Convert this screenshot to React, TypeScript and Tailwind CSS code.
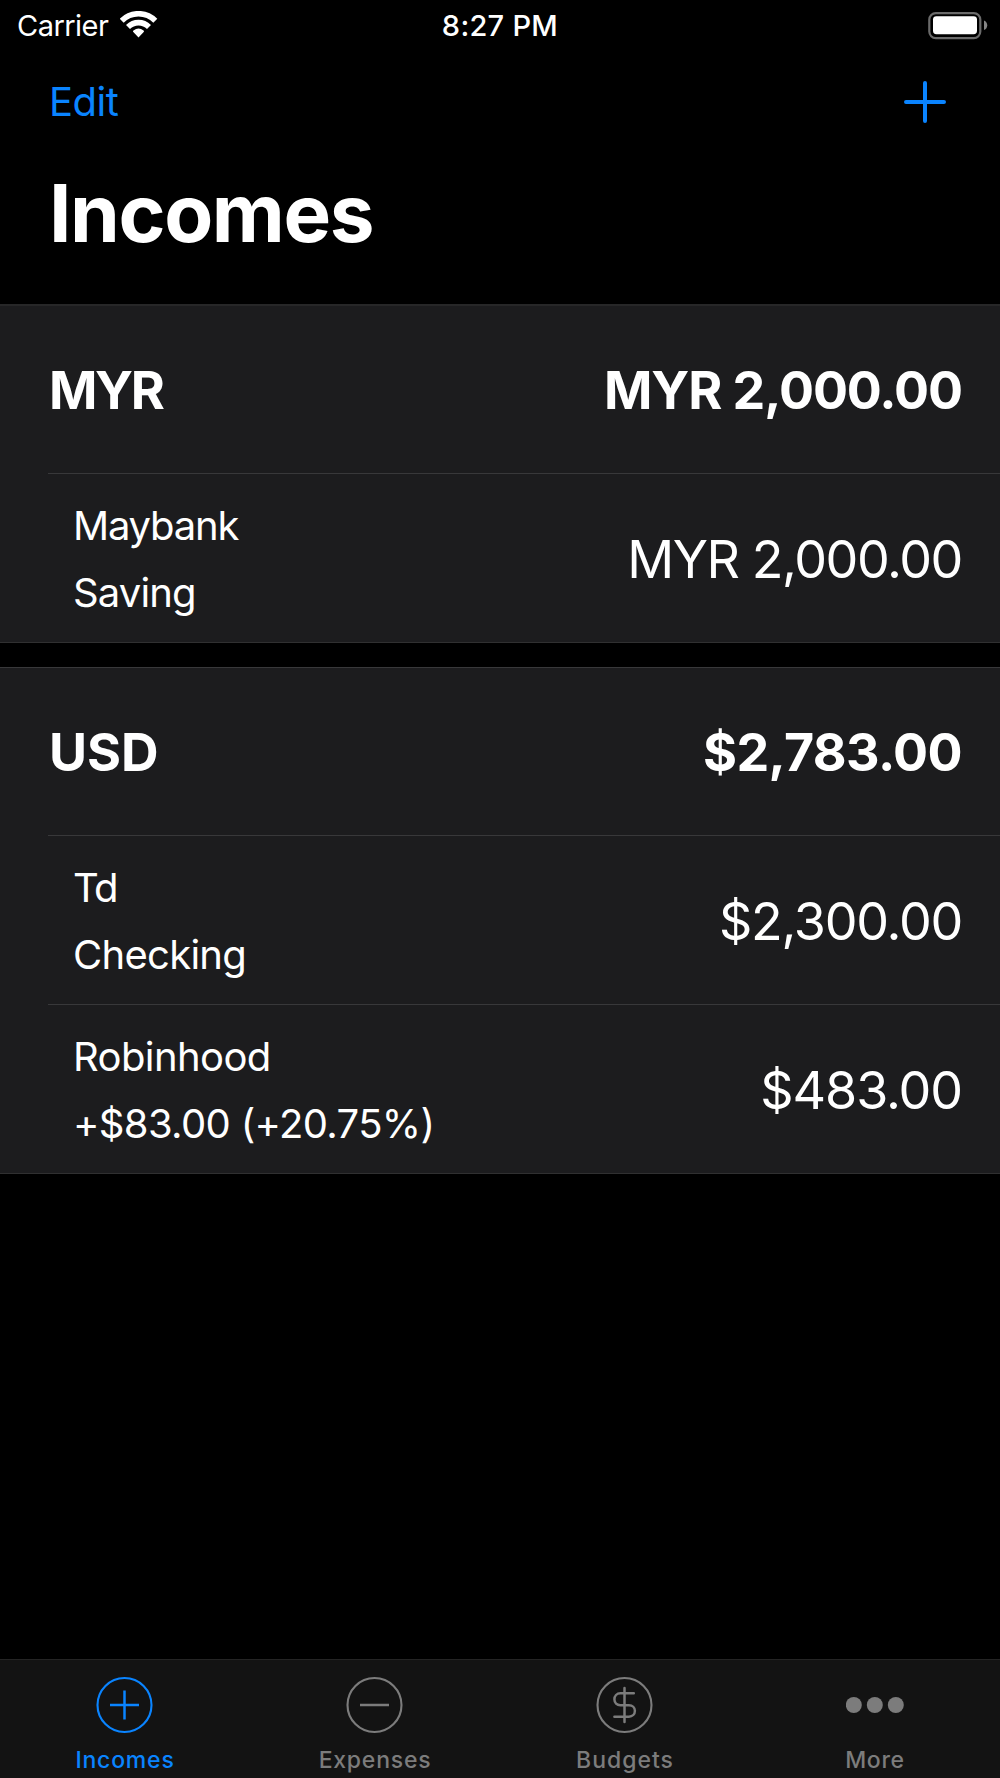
import type { ReactNode } from "react";
import clsx from "clsx";

type Account = {
  name: string;
  nameClass: string;
  detail: string;
  detailClass: string;
  amount: string;
  amountClass: string;
};

type Group = {
  currency: string;
  currencyClass: string;
  total: string;
  totalClass: string;
  sectionClass: string;
  accounts: Account[];
};

const groups: Group[] = [
  {
    currency: "MYR",
    currencyClass: "tracking-[-0.045em]",
    total: "MYR 2,000.00",
    totalClass: "tracking-[-0.0211em]",
    sectionClass: "border-t-2 border-t-[#272728]",
    accounts: [
      {
        name: "Maybank",
        nameClass: "tracking-[-0.03em]",
        detail: "Saving",
        detailClass: "tracking-[-0.0217em]",
        amount: "MYR 2,000.00",
        amountClass: "tracking-[-0.0276em]",
      },
    ],
  },
  {
    currency: "USD",
    currencyClass: "tracking-[-0.001em]",
    total: "$2,783.00",
    totalClass: "tracking-[-0.012em]",
    sectionClass: "border-t border-t-[#38383a]",
    accounts: [
      {
        name: "Td",
        nameClass: "tracking-[-0.04em]",
        detail: "Checking",
        detailClass: "tracking-[-0.018em]",
        amount: "$2,300.00",
        amountClass: "tracking-[-0.0241em]",
      },
      {
        name: "Robinhood",
        nameClass: "tracking-[-0.015em]",
        detail: "+$83.00 (+20.75%)",
        detailClass: "tracking-[-0.0165em]",
        amount: "$483.00",
        amountClass: "tracking-[-0.021em]",
      },
    ],
  },
];

function WifiIcon() {
  return (
    <svg width="38" height="30" viewBox="0 -0.7 38 30" fill="none">
      <path d="M1.7 9A23.7 23.7 0 0 1 35.3 9" stroke="white" strokeWidth="5.6" />
      <path d="M8 15.3A14.8 14.8 0 0 1 29 15.3" stroke="white" strokeWidth="5.6" />
      <path d="M13.3 20.3C12.8 19.8 12.9 19.2 13.5 18.8A8.3 8.3 0 0 1 23.5 18.8C24.1 19.2 24.2 19.8 23.7 20.3L18.5 25.8Z" fill="white" />
    </svg>
  );
}

function BatteryIcon() {
  return (
    <svg width="60" height="28" viewBox="0 0 60 28" fill="none">
      <rect x="1.3" y="1.1" width="51" height="25" rx="6.5" stroke="#6b6b6b" strokeWidth="2.2" />
      <rect x="5" y="4.2" width="44" height="18" rx="3.4" fill="white" />
      <path d="M56 8.4C58.2 9.2 59.2 11 59.2 13.2C59.2 15.4 58.2 17.2 56 18Z" fill="#868686" />
    </svg>
  );
}

function CircleIcon({ children }: { children: ReactNode }) {
  return (
    <svg width="58" height="58" viewBox="0 0 58 58" fill="none" stroke="currentColor" strokeWidth="2.1">
      <circle cx="28.5" cy="29" r="27" />
      {children}
    </svg>
  );
}

const tabs = [
  {
    label: "Incomes",
    className: "text-[#0a84ff] tracking-[0.0347em]",
    icon: (
      <CircleIcon>
        <path d="M14 29H43M28.5 14.5V43.5" strokeWidth="2.5" />
      </CircleIcon>
    ),
  },
  {
    label: "Expenses",
    className: "text-[#7c7c7c] tracking-[0.0333em]",
    icon: (
      <CircleIcon>
        <path d="M14 29H43" strokeWidth="2.5" />
      </CircleIcon>
    ),
  },
  {
    label: "Budgets",
    className: "text-[#7c7c7c] tracking-[0.0431em]",
    icon: (
      <CircleIcon>
        <path
          d="M37.8 17.3H24.4C20.8 17.3 18.4 20 18.4 23.3C18.4 26.7 20.9 29.2 24.4 29.2H32.9C36.5 29.2 38.9 31.6 38.9 34.8C38.9 38.1 36.5 40.7 32.9 40.7H18.4M28.5 12V46"
          strokeWidth="2.5"
          strokeLinecap="round"
        />
      </CircleIcon>
    ),
  },
  {
    label: "More",
    className: "text-[#7c7c7c] tracking-[0.0313em]",
    icon: (
      <svg width="58" height="58" viewBox="0 0 58 58" fill="currentColor">
        <circle cx="7.8" cy="29" r="8" />
        <circle cx="28.8" cy="29" r="8" />
        <circle cx="49.8" cy="29" r="8" />
      </svg>
    ),
  },
];

function AccountRow({ account }: { account: Account }) {
  return (
    <div className="ml-12 flex h-[169px] items-center justify-between border-t border-[#38383a] pt-0.5 pr-[38px] pl-[25px]">
      <div className="text-[40px] leading-[67px]">
        <div className={account.nameClass}>{account.name}</div>
        <div className={account.detailClass}>{account.detail}</div>
      </div>
      <div className={clsx("pt-0.5 text-[52px] leading-[54px]", account.amountClass)}>{account.amount}</div>
    </div>
  );
}

function CurrencySection({ group }: { group: Group }) {
  return (
    <section className={clsx("border-b border-b-[#303031] bg-[#1c1c1e]", group.sectionClass)}>
      <div className="flex h-[167px] items-center justify-between pt-0.5 pr-[38px] pl-[49px] text-[52px] leading-none font-bold">
        <span className={group.currencyClass}>{group.currency}</span>
        <span className={group.totalClass}>{group.total}</span>
      </div>
      {group.accounts.map((account) => (
        <AccountRow key={account.name} account={account} />
      ))}
    </section>
  );
}

export default function App() {
  return (
    <div className="flex h-[1778px] w-[1000px] flex-col overflow-hidden bg-black font-['Inter','Liberation_Sans',sans-serif] text-white">
      {/* Status bar */}
      <div className="grid h-[51px] grid-cols-3 items-center px-3 text-[29px] leading-none">
        <div className="flex items-center gap-3 pl-[5px]">
          <span className="tracking-[-0.018em]">Carrier</span>
          <WifiIcon />
        </div>
        <span className="text-center font-medium tracking-[0.0096em]">8:27 PM</span>
        <div className="flex justify-end">
          <BatteryIcon />
        </div>
      </div>

      {/* Navigation */}
      <header>
        <div className="flex h-[103px] items-center justify-between pr-[53px] pl-[49px] text-[#0a84ff]">
          <button className="pb-0.5 text-[40px] leading-none tracking-[-0.0127em]">Edit</button>
          <button aria-label="Add income">
            <svg width="44" height="44" viewBox="0 0 44 44" stroke="currentColor" strokeWidth="4" strokeLinecap="round">
              <path d="M3 21H41M22 2V40" />
            </svg>
          </button>
        </div>
        <h1 className="mb-8 pl-[49px] text-[80px] leading-[118px] font-bold tracking-[-0.0175em]">Incomes</h1>
      </header>

      <main className="flex flex-1 flex-col gap-6">
        {groups.map((group) => (
          <CurrencySection key={group.currency} group={group} />
        ))}
      </main>

      {/* Tab bar */}
      <nav className="grid h-[119px] grid-cols-4 border-t border-[#242424] bg-[#131313]">
        {tabs.map((tab) => (
          <button
            key={tab.label}
            className={clsx("flex flex-col items-center pt-4 text-[23px] leading-[52px] font-medium", tab.className)}
          >
            {tab.icon}
            <span>{tab.label}</span>
          </button>
        ))}
      </nav>
    </div>
  );
}
